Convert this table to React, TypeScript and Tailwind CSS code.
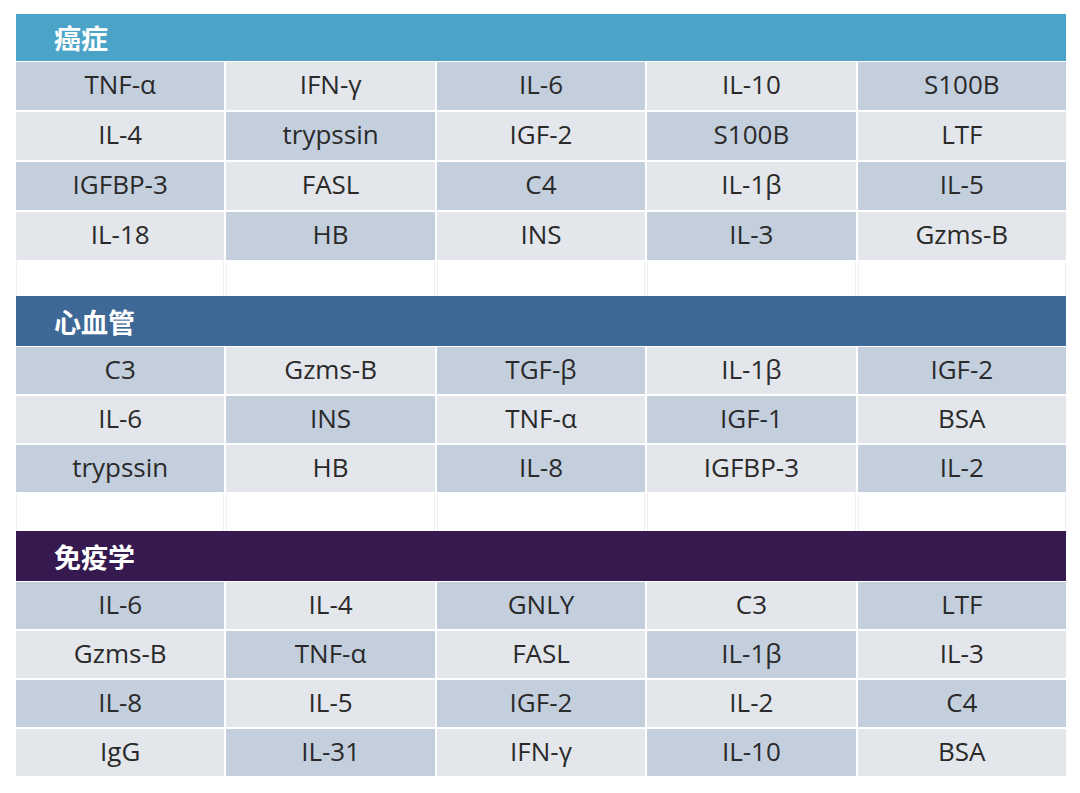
import React from 'react';

type Section = {
  title: string;
  bar: string;
  head: string;
  cellH: string;
  spacer?: string;
  rows: string[][];
};

const sections: Section[] = [
  {
    title: '癌症',
    bar: 'bg-[#4ba4c8]',
    head: 'h-[47px]',
    cellH: 'h-[48px]',
    spacer: 'h-[34px]',
    rows: [
      ['TNF-α', 'IFN-γ', 'IL-6', 'IL-10', 'S100B'],
      ['IL-4', 'trypssin', 'IGF-2', 'S100B', 'LTF'],
      ['IGFBP-3', 'FASL', 'C4', 'IL-1β', 'IL-5'],
      ['IL-18', 'HB', 'INS', 'IL-3', 'Gzms-B'],
    ],
  },
  {
    title: '心血管',
    bar: 'bg-[#3e6896]',
    head: 'h-[50px]',
    cellH: 'h-[47px]',
    spacer: 'h-[37px]',
    rows: [
      ['C3', 'Gzms-B', 'TGF-β', 'IL-1β', 'IGF-2'],
      ['IL-6', 'INS', 'TNF-α', 'IGF-1', 'BSA'],
      ['trypssin', 'HB', 'IL-8', 'IGFBP-3', 'IL-2'],
    ],
  },
  {
    title: '免疫学',
    bar: 'bg-[#35194f]',
    head: 'h-[50px]',
    cellH: 'h-[47px]',
    rows: [
      ['IL-6', 'IL-4', 'GNLY', 'C3', 'LTF'],
      ['Gzms-B', 'TNF-α', 'FASL', 'IL-1β', 'IL-3'],
      ['IL-8', 'IL-5', 'IGF-2', 'IL-2', 'C4'],
      ['IgG', 'IL-31', 'IFN-γ', 'IL-10', 'BSA'],
    ],
  },
];

export default function App() {
  return (
    <div
      className="w-[1080px] h-[793px] bg-white pt-[14px] pl-[16px]"
      style={{ fontFamily: '"Open Sans", "Noto Sans", "Noto Sans CJK SC", sans-serif' }}
    >
      <div className="w-[1050px] flex flex-col">
        {sections.map((s) => (
          <div key={s.title} className="flex flex-col">
            <div className={`${s.bar} ${s.head} flex items-center pl-[38px]`}>
              <span
                className="text-white text-[27px] font-bold leading-none"
                style={{ fontFamily: '"Noto Sans CJK SC", sans-serif' }}
              >
                {s.title}
              </span>
            </div>
            <div className="grid grid-cols-5 gap-[2px] pt-[1px]">
              {s.rows.map((row, ri) =>
                row.map((cell, ci) => (
                  <div
                    key={`${ri}-${ci}`}
                    className={`${s.cellH} flex items-center justify-center pb-[3px] text-[26px] text-[#2a2a2a] ${
                      (ri + ci) % 2 === 0 ? 'bg-[#c4cfde]' : 'bg-[#e3e6eb]'
                    }`}
                  >
                    {cell}
                  </div>
                ))
              )}
              {s.spacer &&
                [0, 1, 2, 3, 4].map((c) => (
                  <div key={`e${c}`} className={`${s.spacer} bg-white border-x border-[#eceef1]`} />
                ))}
            </div>
          </div>
        ))}
      </div>
    </div>
  );
}
